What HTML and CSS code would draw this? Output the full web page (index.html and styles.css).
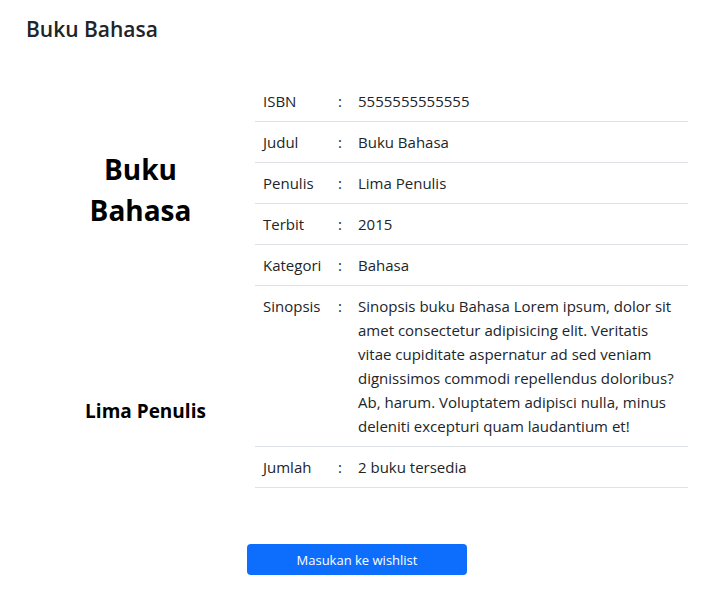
FILE: index.html
```html
<!DOCTYPE html>
<html lang="id">
<head>
<meta charset="utf-8">
<title>Buku Bahasa</title>
<link rel="stylesheet" href="styles.css">
</head>
<body>
<div class="page">
  <h5 class="page-title">Buku Bahasa</h5>
  <div class="detail">
    <div class="cover">
      <h2 class="cover-title">Buku<br>Bahasa</h2>
      <h5 class="cover-author">Lima Penulis</h5>
    </div>
    <table class="info">
      <tbody>
        <tr><td class="lbl">ISBN</td><td class="sep">:</td><td class="val">5555555555555</td></tr>
        <tr><td class="lbl">Judul</td><td class="sep">:</td><td class="val">Buku Bahasa</td></tr>
        <tr><td class="lbl">Penulis</td><td class="sep">:</td><td class="val">Lima Penulis</td></tr>
        <tr><td class="lbl">Terbit</td><td class="sep">:</td><td class="val">2015</td></tr>
        <tr><td class="lbl">Kategori</td><td class="sep">:</td><td class="val">Bahasa</td></tr>
        <tr><td class="lbl">Sinopsis</td><td class="sep">:</td><td class="val">Sinopsis buku Bahasa Lorem ipsum, dolor sit amet consectetur adipisicing elit. Veritatis vitae cupiditate aspernatur ad sed veniam dignissimos commodi repellendus doloribus? Ab, harum. Voluptatem adipisci nulla, minus deleniti excepturi quam laudantium et!</td></tr>
        <tr><td class="lbl">Jumlah</td><td class="sep">:</td><td class="val">2 buku tersedia</td></tr>
      </tbody>
    </table>
  </div>
  <div class="actions">
    <button class="btn-wish" type="button">Masukan ke wishlist</button>
  </div>
</div>
</body>
</html>
```

FILE: styles.css
```css
* { box-sizing: border-box; }
html, body { margin: 0; padding: 0; background: #fff; }
body {
  font-family: "Open Sans", "Noto Sans", sans-serif;
  font-size: 15px;
  line-height: 24px;
  color: #212529;
}
.page {
  padding: 16px 25px 30px 26px;
}
.page-title {
  margin: 0;
  font-size: 21px;
  line-height: 26px;
  font-weight: 600;
}
.detail {
  display: flex;
  margin-top: 39px;
}
.cover {
  width: 229px;
  flex: none;
  display: flex;
  flex-direction: column;
  align-items: center;
  text-align: center;
  color: #000;
}
.cover-title {
  margin: 68px 0 0;
  font-size: 28px;
  line-height: 41px;
  font-weight: 700;
}
.cover-author {
  margin: 168px 0 0;
  padding-left: 10px;
  font-size: 19px;
  line-height: 24px;
  font-weight: 700;
}
.info {
  flex: 1;
  border-collapse: collapse;
}
.info td {
  padding: 8px;
  vertical-align: top;
  border-bottom: 1px solid #dee2e6;
}
.info .lbl { width: 77px; }
.info .sep { width: 18px; padding-left: 6px; padding-right: 0; }
.info .val { padding-left: 8px; padding-right: 8px; }
.actions {
  display: flex;
  justify-content: center;
  margin-top: 56px;
}
.btn-wish {
  width: 220px;
  height: 31px;
  border: 0;
  border-radius: 4px;
  background: #0d6efd;
  color: #fff;
  font-family: inherit;
  font-size: 13px;
  cursor: pointer;
}
```
